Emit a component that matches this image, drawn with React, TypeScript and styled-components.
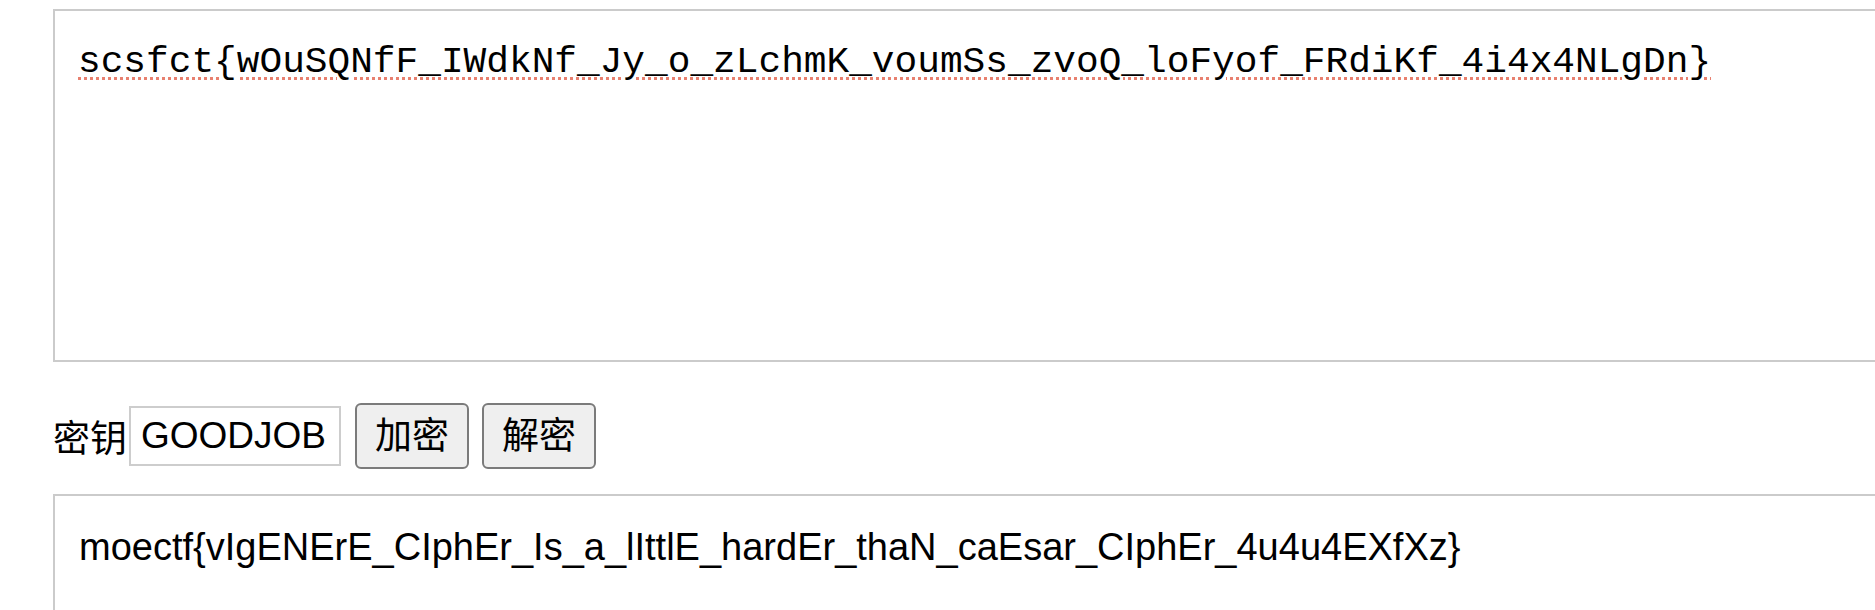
import React from 'react';
import styled, { createGlobalStyle } from 'styled-components';

const cipherText = 'scsfct{wOuSQNfF_IWdkNf_Jy_o_zLchmK_voumSs_zvoQ_loFyof_FRdiKf_4i4x4NLgDn}';
const plainText = 'moectf{vIgENErE_CIphEr_Is_a_lIttlE_hardEr_thaN_caEsar_CIphEr_4u4u4EXfXz}';

const GlobalStyle = createGlobalStyle`
  html, body {
    margin: 0;
    padding: 0;
    background: #fff;
    overflow: hidden;
  }
  body {
    font-family: 'Liberation Sans', 'Noto Sans CJK SC', sans-serif;
    color: #000;
  }
`;

const Page = styled.div`
  display: flex;
  flex-direction: column;
  padding: 9px 0 0 53px;
`;

const Source = styled.textarea`
  box-sizing: border-box;
  width: 1900px;
  height: 353px;
  margin: 0;
  padding: 30px 23px;
  border: 2px solid #cbcbcb;
  font-family: 'Liberation Mono', monospace;
  font-size: 37.8px;
  color: #000;
  background: #fff;
  resize: none;
  outline: none;
  text-decoration: underline dotted #e8806f;
  text-decoration-thickness: 3px;
  text-underline-offset: 5px;
`;

const KeyRow = styled.div`
  display: flex;
  align-items: center;
  margin-top: 41px;
`;

const Label = styled.span`
  font-size: 37px;
  font-family: 'Liberation Sans', 'Noto Sans CJK SC', sans-serif;
`;

const KeyInput = styled.input`
  box-sizing: border-box;
  width: 212px;
  height: 60px;
  margin: 0 1px 0 2px;
  padding: 0 10px;
  border: 2px solid #cdcdcd;
  font-family: 'Liberation Sans', sans-serif;
  font-size: 37px;
  color: #000;
  outline: none;
`;

const Button = styled.button`
  box-sizing: border-box;
  width: 114px;
  height: 66px;
  margin: 0 0 0 13px;
  padding: 0;
  border: 2px solid #7b7b7b;
  border-radius: 6px;
  background: #efefef;
  font-family: 'Liberation Sans', 'Noto Sans CJK SC', sans-serif;
  font-size: 37px;
  color: #000;
  line-height: 1;
`;

const Result = styled.div`
  box-sizing: border-box;
  width: 1900px;
  height: 353px;
  margin-top: 25px;
  padding: 30px 24px;
  border: 2px solid #cbcbcb;
  font-family: 'Liberation Sans', sans-serif;
  font-size: 38px;
`;

export default function App() {
  return (
    <>
      <GlobalStyle />
      <Page>
        <Source defaultValue={cipherText} spellCheck={false} />
        <KeyRow>
          <Label>密钥</Label>
          <KeyInput defaultValue="GOODJOB" />
          <Button>加密</Button>
          <Button>解密</Button>
        </KeyRow>
        <Result>{plainText}</Result>
      </Page>
    </>
  );
}
